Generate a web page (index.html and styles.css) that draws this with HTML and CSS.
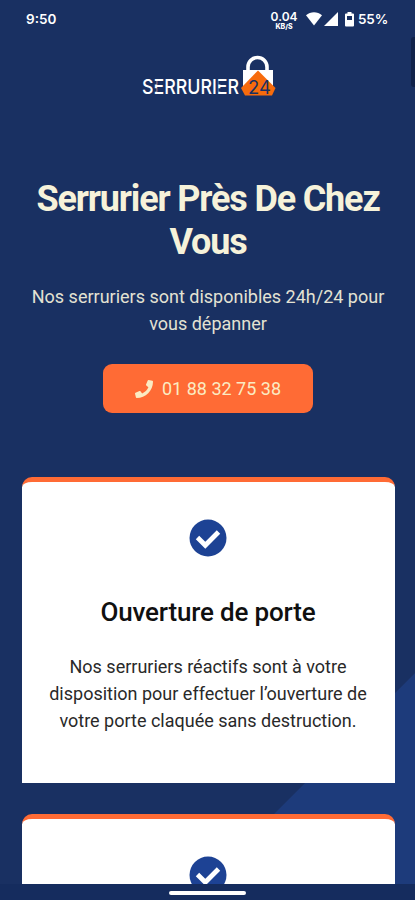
FILE: index.html
```html
<!DOCTYPE html>
<html lang="fr">
<head>
<meta charset="utf-8">
<meta name="viewport" content="width=device-width, initial-scale=1">
<title>Serrurier 24</title>
<link rel="stylesheet" href="styles.css">
</head>
<body>
<div class="screen">
  <header class="status">
    <span class="time">9:50</span>
    <div class="indicators">
      <div class="speed"><span class="rate">0.04</span><span class="unit">KB/S</span></div>
      <svg class="wifi" width="16" height="14" viewBox="0 0 16 14"><path d="M0 3.2C4.5-.8 11.500-.8 16 3.200L8 13.500z" fill="#fff"/></svg>
      <svg class="signal" width="14" height="14" viewBox="0 0 14 14"><path d="M14 0v14H0z" fill="#fff"/></svg>
      <svg class="battery" width="9" height="15" viewBox="0 0 9 15"><path d="M2.500 0h4v1.500H8q1 0 1 1v11q0 1-1 1H1q-1 0-1-1v-11q0-1 1-1h1.500zM2 4v4h5V4z" fill="#fff" fill-rule="evenodd"/></svg>
      <span class="percent">55%</span>
    </div>
  </header>
  <i class="edge-handle"></i>
  <main>
    <svg class="logo" width="136" height="44" viewBox="0 0 136 44">
      <path d="M107 18v-5a9.500 9.500 0 0 1 19 0v5" fill="none" stroke="#fff" stroke-width="3.600"/>
      <path d="M102 16h30v17h-30z" fill="#fff"/>
      <path d="M117 16.500L134.500 34l-3.500 7.500h-27L100 34z" fill="#f76b0c"/>
      <text class="logo-name" x="1" y="40" textLength="97" lengthAdjust="spacingAndGlyphs">SERRURIER</text>
      <path d="M14 27v3.600M14 34.300v3.400M79 27v3.600M79 34.300v3.400" stroke="#193062" stroke-width="3.400"/>
      <text class="logo-number" x="107" y="39.500" textLength="23" lengthAdjust="spacingAndGlyphs">24</text>
    </svg>
    <h1>Serrurier Près De Chez<br>Vous</h1>
    <p class="intro">Nos serruriers sont disponibles 24h/24 pour<br>vous dépanner</p>
    <a class="call" href="tel:0188327538">
      <svg width="18" height="18" viewBox="0 0 512 512"><path fill="currentColor" d="M493.400 24.600l-104-24c-11.300-2.600-22.900 3.300-27.500 13.900l-48 112c-4.200 9.800-1.400 21.300 6.900 28l60.600 49.600c-36 76.700-98.900 140.500-177.200 177.200l-49.600-60.600c-6.800-8.300-18.200-11.100-28-6.900l-112 48C3.900 366.500-2 378.100.600 389.400l24 104C27.100 504.200 36.700 512 48 512c256.100 0 464-207.500 464-464 0-11.200-7.700-20.900-18.600-23.400z"/></svg>
      <span>01 88 32 75 38</span>
    </a>
    <section class="cards">
      <article class="card">
        <svg class="check" width="38" height="38" viewBox="0 0 38 38"><circle cx="19" cy="19" r="18.500" fill="#1d4294"/><path d="M8.500 18.500l7.800 7.800L29.500 13" fill="none" stroke="#fff" stroke-width="4.800"/></svg>
        <h2>Ouverture de porte</h2>
        <p>Nos serruriers réactifs sont à votre<br>disposition pour effectuer l’ouverture de<br>votre porte claquée sans destruction.</p>
      </article>
      <article class="card">
        <svg class="check" width="38" height="38" viewBox="0 0 38 38"><circle cx="19" cy="19" r="18.500" fill="#1d4294"/><path d="M8.500 18.500l7.800 7.800L29.500 13" fill="none" stroke="#fff" stroke-width="4.800"/></svg>
      </article>
    </section>
  </main>
  <footer class="navbar"><i></i></footer>
</div>
</body>
</html>
```
FILE: styles.css
```css
* { box-sizing: border-box; }
body { margin: 0; font-family: Roboto, sans-serif; }
.screen {
  position: relative;
  display: flex;
  flex-direction: column;
  height: 900px;
  overflow: hidden;
  background: linear-gradient(135deg, #193062 0 82.700%, #1d3b7b 82.800%);
}
.status {
  flex: none;
  display: flex;
  justify-content: space-between;
  height: 38px;
  padding: 0 27px 0 26px;
  color: #fff;
  font: 600 13.500px/38px Inter, sans-serif;
}
.indicators { display: flex; align-items: center; }
.speed { display: flex; flex-direction: column; align-items: center; width: 26px; margin: 2px 8px 0 0; }
.rate { font-size: 12px; line-height: 13px; }
.unit { font-size: 7px; line-height: 8px; font-weight: 800; }
.wifi { margin-left: 1px; }
.signal { margin: 0 7px 0 2px; }
.battery { margin-right: 4px; }
.percent { letter-spacing: -.2px; }
.edge-handle { position: absolute; right: 0; top: 37px; width: 4px; height: 50px; border-radius: 3px 0 0 3px; background: #10224a; }
main { flex: 1; min-height: 0; overflow: hidden; display: flex; flex-direction: column; align-items: center; padding-left: 1px; text-align: center; }
.logo { flex: none; margin: 16px 0 0 1px; }
.logo-name { font: 500 20.500px Inter, sans-serif; fill: #fff; }
.logo-number { font: 400 18px Inter, sans-serif; fill: #193062; }
h1 { flex: none; margin: 80px 0 0; color: #f6f2da; font-size: 36px; line-height: 43px; font-weight: 700; letter-spacing: -1.160px; white-space: nowrap; }
.intro { flex: none; margin: 19px 0 0; color: #e3e2d3; font-size: 18px; line-height: 27px; white-space: nowrap; }
.call {
  flex: none;
  display: flex;
  align-items: center;
  justify-content: center;
  gap: 9px;
  width: 210px;
  height: 49px;
  margin-top: 27px;
  border-radius: 9px;
  background: #ff6b35;
  color: #fbebc3;
  font-size: 18px;
  text-decoration: none;
  white-space: nowrap;
}
.cards { flex: none; display: flex; flex-direction: column; gap: 31px; width: 373px; margin-top: 64px; }
.card { display: flex; flex-direction: column; align-items: center; height: 306px; padding-top: 37px; background: #fff; border-top: 5px solid #ff6b35; border-radius: 10px 10px 0 0; }
.check { flex: none; }
h2 { margin: 39px 0 0; color: #101010; font-size: 26px; line-height: 32px; font-weight: 500; letter-spacing: -.180px; white-space: nowrap; }
.card p { margin: 25px 0 0; color: #292929; font-size: 18px; line-height: 27px; white-space: nowrap; }
.navbar { flex: none; display: flex; justify-content: center; height: 16px; padding-top: 7px; background: #152c5e; }
.navbar i { width: 77px; height: 4px; border-radius: 2px; background: #fff; }
```
